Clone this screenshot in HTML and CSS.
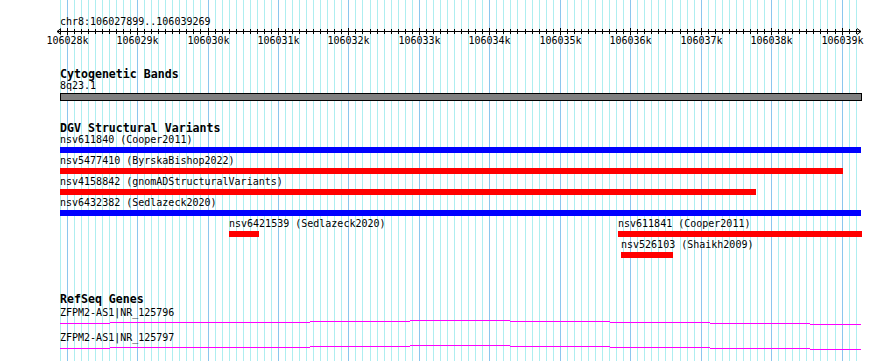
FILE: index.html
```html
<!DOCTYPE html>
<html lang="en">
<head>
  <meta charset="UTF-8" />
  <title>chr8:106027899..106039269</title>
  <link rel="stylesheet" href="styles.css">
</head>
<body>

<div id="browser">
  <!-- grid behind all tracks, drawn by script.js -->
  <svg id="grid" width="890" height="361"></svg>

  <div class="ruler">
    <div class="chrLabel">chr8:106027899..106039269</div>
    <svg id="rulerSvg" width="890" height="20">
      <path class="axis" d="M57 3.5 H861 M57 3.5 L61 0.5 M57 3.5 L61 6.5 M861 3.5 L857 0.5 M861 3.5 L857 6.5" />
    </svg>
  </div>

  <div class="track cyto">
    <h2 class="trackTitle">Cytogenetic Bands</h2>
    <div class="row">
      <div class="feature" style="left:0;width:802px">
        <div class="featureLabel">8q23.1</div>
        <div class="band"></div>
      </div>
    </div>
  </div>

  <div class="track dgv">
    <h2 class="trackTitle">DGV Structural Variants</h2>
    <div class="row">
      <div class="feature" style="left:0;width:801px">
        <div class="featureLabel">nsv611840 (Cooper2011)</div>
        <div class="bar blue"></div>
      </div>
    </div>
    <div class="row">
      <div class="feature" style="left:0;width:783px">
        <div class="featureLabel">nsv5477410 (ByrskaBishop2022)</div>
        <div class="bar red"></div>
      </div>
    </div>
    <div class="row">
      <div class="feature" style="left:0;width:696px">
        <div class="featureLabel">nsv4158842 (gnomADStructuralVariants)</div>
        <div class="bar red"></div>
      </div>
    </div>
    <div class="row">
      <div class="feature" style="left:0;width:801px">
        <div class="featureLabel">nsv6432382 (Sedlazeck2020)</div>
        <div class="bar blue"></div>
      </div>
    </div>
    <div class="row">
      <div class="feature" style="left:169px;width:30px">
        <div class="featureLabel">nsv6421539 (Sedlazeck2020)</div>
        <div class="bar red"></div>
      </div>
      <div class="feature" style="left:558px;width:244px">
        <div class="featureLabel">nsv611841 (Cooper2011)</div>
        <div class="bar red"></div>
      </div>
    </div>
    <div class="row">
      <div class="feature" style="left:561px;width:52px">
        <div class="featureLabel">nsv526103 (Shaikh2009)</div>
        <div class="bar red"></div>
      </div>
    </div>
  </div>

  <div class="track refseq">
    <h2 class="trackTitle">RefSeq Genes</h2>
    <div class="geneRow">
      <div class="featureLabel">ZFPM2-AS1|NR_125796</div>
      <svg class="gene" width="802" height="13">
        <path d="M0 4.5 H50 M50 3.5 H150 M150 3.5 H250 M250 2.5 H350 M350 1.5 H450 M450 2.5 H550 M550 3.5 H650 M650 4.5 H750 M750 5.5 H801" />
      </svg>
    </div>
    <div class="geneRow">
      <div class="featureLabel">ZFPM2-AS1|NR_125797</div>
      <svg class="gene" width="802" height="13">
        <path d="M0 4.5 H50 M50 3.5 H150 M150 3.5 H250 M250 2.5 H350 M350 1.5 H450 M450 2.5 H550 M550 3.5 H650 M650 4.5 H750 M750 5.5 H801" />
      </svg>
    </div>
  </div>
</div>

<script src="script.js"></script>
</body>
</html>
```

FILE: styles.css
```css
body {
  margin: 0;
  background-color: #fff;
  font-family: "DejaVu Sans Mono", "Liberation Mono", monospace;
  font-size: 10px;
  color: #000;
  overflow: hidden;
}
#browser {
  position: relative;
  width: 890px;
  height: 361px;
}
#grid {
  position: absolute;
  top: 0;
  left: 0;
  z-index: 0;
}
.ruler, .track {
  position: relative;
  z-index: 1;
}
.chrLabel {
  padding: 16px 0 0 60px;
  line-height: 12px;
}
#rulerSvg { display: block; }
.axis {
  stroke: #000;
  stroke-width: 1;
  fill: none;
}
.tick { stroke: #000; stroke-width: 1; }
.tickLabel {
  font-family: "DejaVu Sans Mono", monospace;
  font-size: 10px;
  fill: #000;
}
.track { padding-left: 60px; }
.cyto { margin-top: 21px; }
.dgv { margin-top: 22px; }
.refseq { margin-top: 34px; }
.trackTitle {
  margin: 0;
  font-size: 11.6px;
  font-weight: bold;
  line-height: 11px;
}
.refseq .trackTitle { margin-bottom: 2px; }
.row {
  position: relative;
  width: 802px;
  height: 21px;
}
.feature {
  position: absolute;
  top: 0;
}
.featureLabel {
  line-height: 12px;
  white-space: nowrap;
}
.bar {
  height: 6px;
  margin-top: 1px;
}
.bar.blue { background-color: #00f; }
.bar.red { background-color: #f00; }
.band {
  height: 8px;
  margin-top: 1px;
  box-sizing: border-box;
  border: 1px solid #000;
  background-color: #808080;
}
.geneRow { height: 25px; }
.gene { display: block; }
.gene path {
  stroke: #f0f;
  stroke-width: 1;
  fill: none;
}
```

FILE: script.js
```javascript
const start = 106027899;
const end = 106039269;
const x0 = 60;
const pxPerBp = 801 / (end - start);
const ns = 'http://www.w3.org/2000/svg';
const grid = document.getElementById('grid');
const ruler = document.getElementById('rulerSvg');

function line(parent, x1, y1, x2, y2, attrs) {
  const l = document.createElementNS(ns, 'line');
  l.setAttribute('x1', x1);
  l.setAttribute('y1', y1);
  l.setAttribute('x2', x2);
  l.setAttribute('y2', y2);
  for (const k in attrs) l.setAttribute(k, attrs[k]);
  parent.appendChild(l);
}

for (let bp = 106027900; bp < end; bp += 100) {
  const x = Math.floor(x0 + (bp - start) * pxPerBp) + 0.5;
  const major = bp % 1000 === 0;

  line(grid, x, 0, x, 361, { stroke: major ? '#8cc6ee' : '#aeeef0', 'stroke-width': 1 });

  if (major) {
    line(ruler, x, 0, x, 7, { class: 'tick' });
    const t = document.createElementNS(ns, 'text');
    t.setAttribute('x', x);
    t.setAttribute('y', 16);
    t.setAttribute('text-anchor', 'middle');
    t.setAttribute('class', 'tickLabel');
    t.textContent = (bp / 1000) + 'k';
    ruler.appendChild(t);
  } else {
    line(ruler, x, 1, x, 6, { class: 'tick' });
  }
}
```
